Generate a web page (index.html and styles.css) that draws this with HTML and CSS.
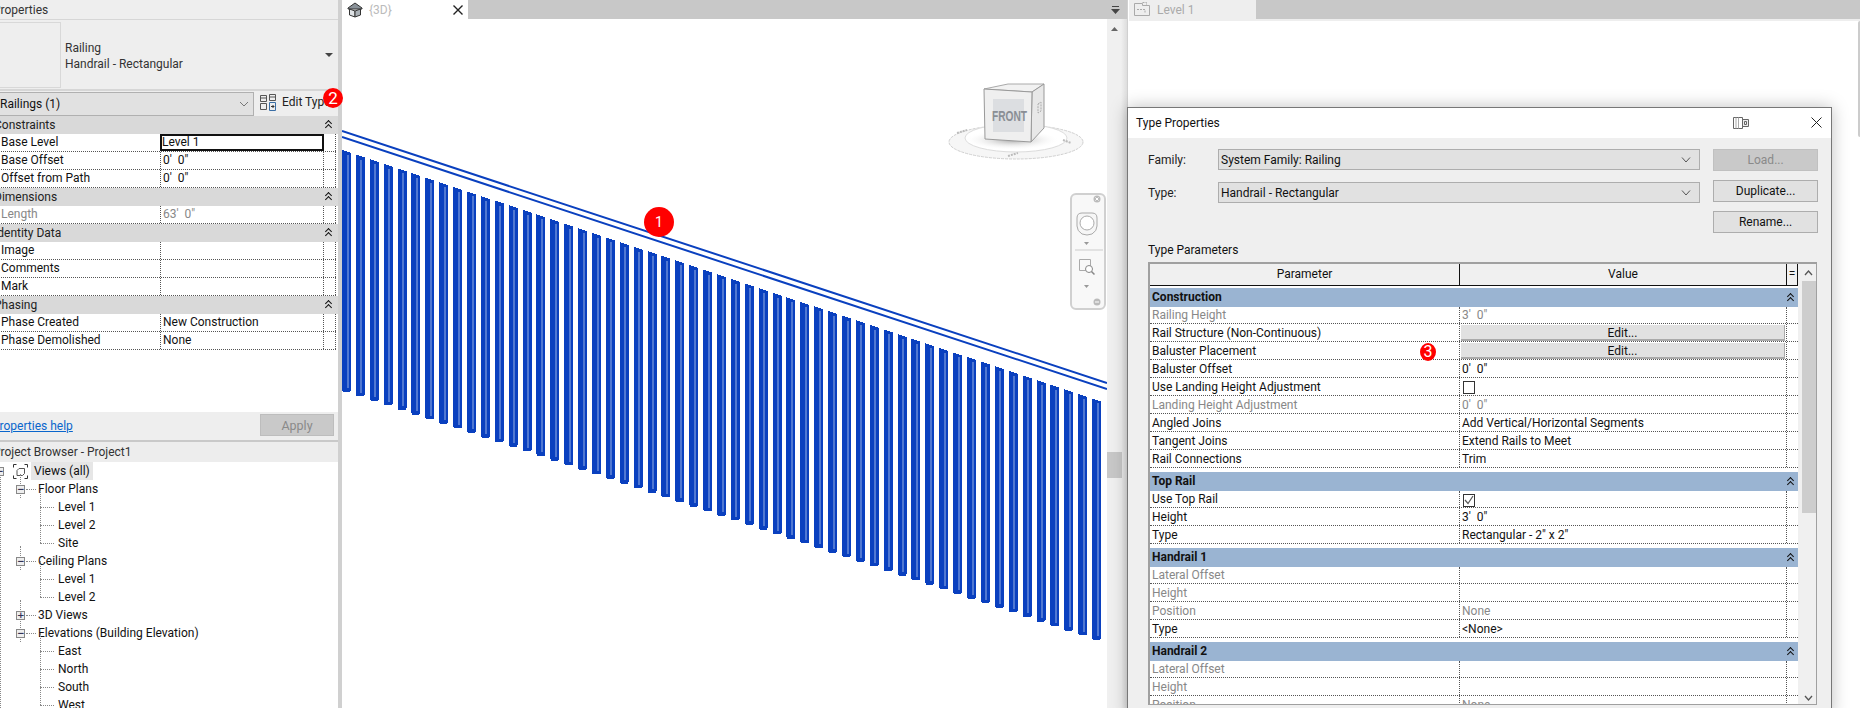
FILE: index.html
```html
<!DOCTYPE html>
<html lang="en">
<head>
<meta charset="utf-8">
<title>Type Properties</title>
<link rel="stylesheet" href="styles.css">
</head>
<body>
<div class="app">

  <aside class="side">
    <div class="side-inner">
      <div class="pane-title">Properties</div>
      <div class="type-sel">
        <div class="thumb"></div>
        <div class="type-name"><div>Railing</div><div>Handrail - Rectangular</div></div>
        <svg class="caret" width="8" height="4" viewBox="0 0 8 4"><path d="M0 0h8L4 4z" fill="#444"/></svg>
      </div>
      <div class="filter-row">
        <div class="filter">Railings (1)
          <svg class="chev" width="10" height="6" viewBox="0 0 10 6"><path d="M1 1l4 4 4-4" fill="none" stroke="#777"/></svg>
        </div>
        <div class="edit-type">
          <svg width="17" height="17" viewBox="0 0 17 17" fill="none" stroke="#555"><path d="M.5 1.500h6v6h-6zM.5 9.500h6v6h-6zM9.500.500h6v6h-6zM.500 4h6M9.500 3h6"/><path d="M9.500 8.500h6v8h-6z" stroke="#3a6ea5" /><path d="M11 12.500h3M12.500 11l1.500 1.500-1.500 1.500" stroke="#333"/></svg>
          <span>Edit Type</span>
        </div>
      </div>
      <div class="prop-table">
        <div class="grp">Constraints<i class="dbl"></i></div>
        <div class="row"><span class="k">Base Level</span><span class="v v-active">Level 1</span><span class="e"></span></div>
        <div class="row"><span class="k">Base Offset</span><span class="v">0'&nbsp; 0"</span><span class="e"></span></div>
        <div class="row"><span class="k">Offset from Path</span><span class="v">0'&nbsp; 0"</span><span class="e"></span></div>
        <div class="grp">Dimensions<i class="dbl"></i></div>
        <div class="row off"><span class="k">Length</span><span class="v">63'&nbsp; 0"</span><span class="e"></span></div>
        <div class="grp">Identity Data<i class="dbl"></i></div>
        <div class="row"><span class="k">Image</span><span class="v"></span><span class="e"></span></div>
        <div class="row"><span class="k">Comments</span><span class="v"></span><span class="e"></span></div>
        <div class="row"><span class="k">Mark</span><span class="v"></span><span class="e"></span></div>
        <div class="grp">Phasing<i class="dbl"></i></div>
        <div class="row"><span class="k">Phase Created</span><span class="v">New Construction</span><span class="e"></span></div>
        <div class="row"><span class="k">Phase Demolished</span><span class="v">None</span><span class="e"></span></div>
      </div>
      <div class="help-bar"><a class="help" href="#">Properties help</a><div class="apply">Apply</div></div>
      <div class="pane-title browser-title">Project Browser - Project1</div>
      <div class="tree">
        <div class="node n0"><b class="box">−</b><svg class="vicon" width="15" height="15" viewBox="0 0 15 15" fill="none" stroke="#333"><path d="M.5 3.500v-3h3M11.500.500h3v3M14.500 11.500v3h-3M3.500 14.500h-3v-3"/><path d="M4 6.500l2-2h5.500v5l-2 2H4z" stroke="#555"/></svg><span class="sel">Views (all)</span></div>
        <div class="node n1"><b class="box">−</b><span>Floor Plans</span></div>
        <div class="node n2"><span>Level 1</span></div>
        <div class="node n2"><span>Level 2</span></div>
        <div class="node n2 last"><span>Site</span></div>
        <div class="node n1"><b class="box">−</b><span>Ceiling Plans</span></div>
        <div class="node n2"><span>Level 1</span></div>
        <div class="node n2 last"><span>Level 2</span></div>
        <div class="node n1"><b class="box plus">+</b><span>3D Views</span></div>
        <div class="node n1"><b class="box">−</b><span>Elevations (Building Elevation)</span></div>
        <div class="node n2"><span>East</span></div>
        <div class="node n2"><span>North</span></div>
        <div class="node n2"><span>South</span></div>
        <div class="node n2"><span>West</span></div>
      </div>
    </div>
  </aside>

  <section class="view3d">
    <div class="tabbar">
      <div class="tab">
        <svg width="16" height="16" viewBox="0 0 16 16"><path d="M1 6l7-5 7 5v1H1z" fill="#8a9299" stroke="#333"/><path d="M2.500 7l5.500 2v6l-5.500-2z" fill="#dfe3e6" stroke="#333"/><path d="M13.500 7L8 9v6l5.500-2z" fill="#aab1b7" stroke="#333"/></svg>
        <span class="tab-name">{3D}</span>
        <svg class="tab-x" width="10" height="10" viewBox="0 0 10 10"><path d="M.5.500l9 9M9.500.500l-9 9" stroke="#222" stroke-width="1.400"/></svg>
      </div>
      <div class="tab-rest"><svg width="9" height="8" viewBox="0 0 9 8"><path d="M1 0h7v1H1zM0 3h9L4.500 8z" fill="#444"/></svg></div>
    </div>
    <div class="canvas">
      <svg class="rail" width="765" height="689" viewBox="342 19 765 689">
        <defs>
          <g id="bal" shape-rendering="crispEdges">
            <path d="M342 150l9 3v237l-1 1.500h-7l-1-1.500z" fill="#0a40bf"/>
            <rect x="346.500" y="155" width="2" height="233" fill="#5078d2"/>
          </g>
          <g id="b5">
            <use href="#bal"/>
            <use href="#bal" transform="translate(13.890 4.600)"/>
            <use href="#bal" transform="translate(27.780 9.200)"/>
            <use href="#bal" transform="translate(41.670 13.800)"/>
            <use href="#bal" transform="translate(55.560 18.400)"/>
          </g>
        </defs>
        <use href="#b5"/>
        <use href="#b5" transform="translate(69.450 23)"/>
        <use href="#b5" transform="translate(138.900 46)"/>
        <use href="#b5" transform="translate(208.350 69)"/>
        <use href="#b5" transform="translate(277.800 92)"/>
        <use href="#b5" transform="translate(347.250 115)"/>
        <use href="#b5" transform="translate(416.700 138)"/>
        <use href="#b5" transform="translate(486.150 161)"/>
        <use href="#b5" transform="translate(555.600 184)"/>
        <use href="#b5" transform="translate(625.050 207)"/>
        <use href="#b5" transform="translate(694.500 230)"/>
        <path d="M342 131L1107 383M342 137L1107 389" stroke="#0a40bf" stroke-width="2" fill="none"/>
      </svg>
      <div class="badge b1">1</div>

      <svg class="cube" width="140" height="84" viewBox="0 0 140 84">
        <defs>
          <radialGradient id="sh"><stop offset="0" stop-color="#8c8c8c" stop-opacity=".75"/><stop offset="1" stop-color="#fff" stop-opacity="0"/></radialGradient>
        </defs>
        <ellipse cx="70" cy="62" rx="67" ry="17" fill="#f6f6f6" stroke="#cfcfcf" stroke-dasharray="3 1"/>
        <ellipse cx="70" cy="58" rx="51" ry="14" fill="#fff" stroke="#dcdcdc"/>
        <ellipse cx="66" cy="60" rx="48" ry="10" fill="url(#sh)"/>
        <path d="M38 9L62 4h36L86 12z" fill="#f2f2f2" stroke="#aaa"/>
        <path d="M86 12L98 4v44L85 62z" fill="#e8e8e8" stroke="#999"/>
        <path d="M38 9l48 3-1 50-46-3z" fill="#efefef" stroke="#999"/>
        <rect x="47" y="19" width="31" height="33" fill="#dcdee1"/>
        <text class="front" x="46" y="41" textLength="35" lengthAdjust="spacingAndGlyphs">FRONT</text>
        <path d="M92 24l3-2v9l-3 2z" fill="none" stroke="#aaa" stroke-dasharray="2 1"/>
        <path d="M11 53l10-3M117 60l8 3M62 76l10-3" stroke="#bbb" stroke-width="2" stroke-dasharray="2 1"/>
      </svg>

      <div class="navbar">
        <svg width="32" height="113" viewBox="0 0 32 113" fill="none">
          <circle cx="25" cy="4" r="3.500" fill="#bbb"/>
          <path d="M23.500 2.500l3 3M26.500 2.500l-3 3" stroke="#fff"/>
          <path d="M5 23q0-5 5-5h10q5 0 5 5v8q0 5-5 8-5 2-10 0-5-3-5-8z" stroke="#aaa" fill="#f6f6f6"/>
          <circle cx="15" cy="28" r="7" stroke="#aaa" fill="#fff"/>
          <path d="M12 47h5l-2.500 3z" fill="#999"/>
          <path d="M3 55h28" stroke="#ccc"/>
          <path d="M7.500 64.500h11v11h-11z" stroke="#aaa"/>
          <circle cx="17" cy="74" r="3.500" stroke="#888" fill="#fff"/>
          <path d="M19.500 76.500l3 3" stroke="#888" stroke-width="1.500"/>
          <path d="M12 90h5l-2.500 3z" fill="#999"/>
          <circle cx="25" cy="107" r="3.500" fill="#bbb"/>
          <path d="M23 107h4" stroke="#fff"/>
        </svg>
      </div>
      <div class="vscroll">
        <svg class="vup" width="15" height="15" viewBox="0 0 15 15"><path d="M4 10l3.500-4 3.500 4z" fill="#666"/></svg>
        <div class="vthumb"></div>
      </div>
    </div>
  </section>

  <section class="view2">
    <div class="tabbar tabbar2">
      <div class="tab tab2">
        <svg width="17" height="15" viewBox="0 0 17 15" fill="none" stroke="#aaa"><path d="M.5 1.500h8v2h7v10H.5z"/><path d="M8.500.5h4v3M3 7.500h8v4" stroke-dasharray="2 1"/></svg>
        <span class="tab-name t2">Level 1</span>
      </div>
      <div class="tab-rest2"></div>
    </div>
    <div class="strip"></div>
    <div class="canvas2"><div class="edge"></div></div>
  </section>

  <div class="badge b2">2</div>

  <div class="dialog">
    <div class="dlg-title">
      <span>Type Properties</span>
      <svg class="preview" width="16" height="14" viewBox="0 0 16 14" fill="none" stroke="#666"><path d="M.5 1.500h9v11h-9z"/><path d="M3 1.500v11M5.500 1.500v11" stroke="#aaa"/><path d="M9.500 3.500h6v7h-6z" fill="#eee"/><path d="M11.500 5.500h2v3h-2z"/></svg>
      <svg class="close" width="11" height="11" viewBox="0 0 11 11"><path d="M.5.500l10 10M10.500.500l-10 10" stroke="#222"/></svg>
    </div>
    <div class="dlg-body">
      <div class="form">
        <div class="form-left">
          <div class="f-row"><label>Family:</label><div class="combo"><span>System Family: Railing</span><svg width="10" height="6" viewBox="0 0 10 6"><path d="M1 .500l4 4.500 4-4.500" fill="none" stroke="#555"/></svg></div></div>
          <div class="f-row"><label>Type:</label><div class="combo"><span>Handrail - Rectangular</span><svg width="10" height="6" viewBox="0 0 10 6"><path d="M1 .500l4 4.500 4-4.500" fill="none" stroke="#555"/></svg></div></div>
        </div>
        <div class="form-btns">
          <div class="btn disabled">Load...</div>
          <div class="btn">Duplicate...</div>
          <div class="btn">Rename...</div>
        </div>
      </div>
      <div class="tp-label">Type Parameters</div>
      <div class="tp-wrap">
        <div class="tp-main">
          <div class="tp-head"><span class="c1">Parameter</span><span class="c2">Value</span><span class="c3">=</span></div>
          <div class="tgrp">Construction<i class="dbl"></i></div>
          <div class="trow off"><span class="c1">Railing Height</span><span class="c2">3'&nbsp; 0"</span><span class="c3"></span></div>
          <div class="trow"><span class="c1">Rail Structure (Non-Continuous)</span><span class="c2 cbtn"><b>Edit...</b></span><span class="c3"></span></div>
          <div class="trow"><span class="c1">Baluster Placement</span><span class="c2 cbtn"><b>Edit...</b></span><span class="c3"></span></div>
          <div class="trow"><span class="c1">Baluster Offset</span><span class="c2">0'&nbsp; 0"</span><span class="c3"></span></div>
          <div class="trow"><span class="c1">Use Landing Height Adjustment</span><span class="c2"><i class="chk"></i></span><span class="c3"></span></div>
          <div class="trow off"><span class="c1">Landing Height Adjustment</span><span class="c2">0'&nbsp; 0"</span><span class="c3"></span></div>
          <div class="trow"><span class="c1">Angled Joins</span><span class="c2">Add Vertical/Horizontal Segments</span><span class="c3"></span></div>
          <div class="trow"><span class="c1">Tangent Joins</span><span class="c2">Extend Rails to Meet</span><span class="c3"></span></div>
          <div class="trow"><span class="c1">Rail Connections</span><span class="c2">Trim</span><span class="c3"></span></div>
          <div class="tgrp gapped">Top Rail<i class="dbl"></i></div>
          <div class="trow"><span class="c1">Use Top Rail</span><span class="c2"><i class="chk"><svg width="10" height="10" viewBox="0 0 10 10"><path d="M1 5l3 3.500L9 1" fill="none" stroke="#555" stroke-width="1.200"/></svg></i></span><span class="c3"></span></div>
          <div class="trow"><span class="c1">Height</span><span class="c2">3'&nbsp; 0"</span><span class="c3"></span></div>
          <div class="trow"><span class="c1">Type</span><span class="c2">Rectangular - 2" x 2"</span><span class="c3"></span></div>
          <div class="tgrp gapped">Handrail 1<i class="dbl"></i></div>
          <div class="trow off"><span class="c1">Lateral Offset</span><span class="c2"></span><span class="c3"></span></div>
          <div class="trow off"><span class="c1">Height</span><span class="c2"></span><span class="c3"></span></div>
          <div class="trow off"><span class="c1">Position</span><span class="c2">None</span><span class="c3"></span></div>
          <div class="trow"><span class="c1">Type</span><span class="c2">&lt;None&gt;</span><span class="c3"></span></div>
          <div class="tgrp gapped">Handrail 2<i class="dbl"></i></div>
          <div class="trow off"><span class="c1">Lateral Offset</span><span class="c2"></span><span class="c3"></span></div>
          <div class="trow off"><span class="c1">Height</span><span class="c2"></span><span class="c3"></span></div>
          <div class="trow off"><span class="c1">Position</span><span class="c2">None</span><span class="c3"></span></div>
        </div>
        <div class="tp-scroll">
          <svg class="sc-up" width="9" height="6" viewBox="0 0 9 6"><path d="M1 5l3.500-4L8 5" fill="none" stroke="#555" stroke-width="1.300"/></svg>
          <div class="sc-thumb"></div>
          <svg class="sc-down" width="9" height="6" viewBox="0 0 9 6"><path d="M1 1l3.500 4L8 1" fill="none" stroke="#555" stroke-width="1.300"/></svg>
        </div>
      </div>
    </div>
    <div class="badge b3">3</div>
  </div>
</div>
</body>
</html>
```

FILE: styles.css
```css
* { box-sizing: border-box; }
html, body { margin: 0; height: 100%; overflow: hidden; background: #fff; }
body { font: 12px/18px Roboto, "Liberation Sans", sans-serif; color: #111; }
.app { position: relative; display: flex; width: 1860px; height: 708px; overflow: hidden; }
.dbl { position: absolute; right: 7px; top: 3px; width: 7px; height: 10px; }
.dbl::before, .dbl::after { content: ""; position: absolute; left: 1.500px; width: 4px; height: 4px; border-left: 1.500px solid #111; border-top: 1.500px solid #111; transform: rotate(45deg); }
.dbl::before { top: 2px; }
.dbl::after { top: 6px; }

/* left panel */
.side { flex: 0 0 342px; overflow: hidden; background: #eee; border-right: 4px solid #d0d0d0; }
.side-inner { width: 346px; margin-left: -8px; }
.pane-title { height: 19px; padding: 1px 0 0 1px; color: #333; }
.type-sel { display: flex; align-items: center; height: 72px; border: 1px solid #d6d6d6; border-width: 1px 0 2px; padding: 2px 0 1px 8px; }
.thumb { width: 61px; height: 66px; border: 1px solid #d8d8d8; border-left: 0; flex: none; }
.type-name { flex: 1; padding-left: 4px; color: #333; line-height: 16px; margin-top: 2px; }
.caret { margin-right: 5px; }
.filter-row { display: flex; height: 25px; padding-top: 1px; }
.filter { display: flex; align-items: center; justify-content: space-between; width: 262px; height: 24px; background: #e1e1e1; border: 1px solid #b0b0b0; border-left: 0; padding: 0 4px 0 8px; }
.edit-type { display: flex; align-items: center; gap: 5px; height: 20px; padding-left: 6px; white-space: nowrap; color: #222; }
.prop-table { background: #fff; height: 296px; }
.grp { position: relative; height: 18px; background: #d9d9d9; padding-left: 2px; color: #222; }
.row { display: flex; height: 18px; border-bottom: 1px dotted #555; width: 344px; }
.row .k { width: 168px; padding-left: 9px; line-height: 17px; }
.row .v { width: 164px; padding-left: 2px; line-height: 17px; border-left: 1px dotted #555; border-right: 1px dotted #555; }
.row .e { width: 12px; border-right: 1px dotted #555; }
.row.off { color: #888; }
.v-active { outline: 2px solid #111; outline-offset: -2px; border: 0 !important; }
.help-bar { display: flex; align-items: center; justify-content: space-between; height: 28px; background: #eee; padding-right: 4px; }
.help { color: #0a66cc; }
.apply { width: 74px; height: 22px; background: #c9c9c9; border: 1px solid #bdbdbd; text-align: center; line-height: 22px; color: #8a8a8a; margin-top: -2px; font-size: 12.500px; }
.browser-title { border-top: 2px solid #c9c9c9; height: 22px; padding-top: 0; line-height: 20px; background: #ededed; }
.tree { background: #fff; height: 246px; }
.node { position: relative; height: 18px; display: flex; align-items: center; white-space: nowrap; }
.node span { position: relative; }
.n0 { padding-left: 8px; }
.n1 { padding-left: 46px; }
.n2 { padding-left: 66px; }
.box { position: absolute; left: 24px; top: 5px; width: 9px; height: 9px; border: 1px solid #888; background: #eee; font: 700 9px/7px "DejaVu Sans", sans-serif; text-align: center; color: #335; z-index: 1; }
.n0 .box { left: 3px; }
.n1::before { content: ""; position: absolute; left: 34px; top: 9px; width: 10px; border-top: 1px dotted #888; }
.n1::after { content: ""; position: absolute; left: 28px; top: -6px; height: 24px; border-left: 1px dotted #888; }
.n0::after { content: ""; position: absolute; left: 8px; top: 12px; height: 240px; border-left: 1px dotted #888; }
.n2::before { content: ""; position: absolute; left: 48px; top: 9px; width: 14px; border-top: 1px dotted #888; }
.n2::after { content: ""; position: absolute; left: 48px; top: -9px; height: 18px; border-left: 1px dotted #888; }
.vicon { margin: 0 3px 0 13px; flex: none; }
.sel { background: #e6e6e6; padding: 0 3px; }

/* badges */
.badge { position: absolute; border-radius: 50%; background: #f00; color: #fff; text-align: center; }
.b2 { left: 323px; top: 88px; width: 20px; height: 20px; font-size: 17px; line-height: 20px; }
.b1 { left: 302px; top: 188px; width: 30px; height: 30px; font-size: 14px; line-height: 30px; }
.b3 { left: 292px; top: 235px; width: 16px; height: 18px; font-size: 16px; line-height: 18px; }

/* 3d view */
.view3d { flex: 0 0 786px; position: relative; border-right: 1px solid #d0d0d0; }
.tabbar { display: flex; height: 19px; background: #c8c8c8; }
.tab { display: flex; align-items: center; width: 126px; height: 19px; padding-left: 5px; background: #fff; position: relative; flex: none; }
.tab-name { margin-left: 6px; color: #bbb; }
.tab-x { position: absolute; right: 5px; top: 5px; }
.tab-rest { flex: 1; display: flex; justify-content: flex-end; align-items: center; padding-right: 7px; }
.canvas { position: relative; height: 689px; }
.rail { display: block; }
.cube { position: absolute; left: 604px; top: 61px; }
.front { font: 700 15px "Liberation Sans", sans-serif; fill: #8a8e94; }
.navbar { position: absolute; left: 728px; top: 174px; width: 36px; height: 117px; background: #f8f8f8; border: 2px solid #d0d0d0; border-radius: 6px; }
.navbar svg { display: block; }
.vscroll { position: absolute; left: 765px; top: 0; bottom: 0; width: 20px; background: linear-gradient(90deg, #f0f0f0 0, #f0f0f0 70%, #ddd 100%); }
.vup { position: absolute; left: 0; top: 2px; display: block; }
.vthumb { position: absolute; left: 0; top: 433px; width: 15px; height: 26px; background: #c8c8c8; }

/* right view */
.view2 { flex: 1; position: relative; padding-left: 1px; }
.tab2 { background: #eee; width: 127px; }
.tab-name.t2 { color: #aaa; margin-left: 6px; }
.strip { height: 2px; background: #eee; }
.canvas2 { position: relative; height: 687px; background: #fff; }
.edge { position: absolute; right: 0; top: 0; width: 2px; height: 116px; background: #ccc; border-radius: 2px 0 0 2px; }

/* dialog */
.dialog { position: absolute; left: 1127px; top: 107px; width: 705px; height: 610px; background: #efefef; border: 1px solid #777; box-shadow: 0 0 16px rgba(0,0,0,.25); }
.dlg-title { position: relative; height: 30px; background: #fff; display: flex; align-items: center; padding-left: 8px; }
.preview { position: absolute; left: 605px; top: 8px; }
.close { position: absolute; left: 683px; top: 9px; }
.dlg-body { padding: 11px 13px 0 20px; }
.form { display: flex; height: 85px; }
.form-left { width: 553px; }
.f-row { display: flex; align-items: center; margin-bottom: 12px; height: 21px; }
.f-row label { width: 70px; color: #222; }
.combo { display: flex; align-items: center; justify-content: space-between; width: 482px; height: 21px; background: #e1e1e1; border: 1px solid #adadad; padding: 0 8px 0 2px; }
.form-btns { margin-left: 13px; width: 105px; }
.btn { height: 22px; margin-bottom: 9px; background: #e1e1e1; border: 1px solid #adadad; text-align: center; line-height: 20px; }
.btn.disabled { background: #c9c9c9; border-color: #c0c0c0; color: #8a8a8a; }
.tp-label { margin-top: 7px; height: 18px; }
.tp-wrap { display: flex; margin-top: 3px; width: 669px; height: 443px; border: 2px solid #a0a0a0; border-width: 2px 1px 1px 2px; background: #fff; overflow: hidden; }
.tp-main { width: 648px; flex: none; background: #fff; overflow: hidden; }
.tp-head { display: flex; height: 22px; background: #f0f0f0; border-bottom: 1px solid #111; text-align: center; }
.tp-head span { line-height: 20px; }
.tp-head .c2 { border-left: 1px solid #111; }
.tp-head .c3 { border-left: 1px solid #111; border-right: 1px solid #111; }
.c1 { width: 309px; flex: none; white-space: nowrap; }
.c2 { width: 327px; flex: none; white-space: nowrap; }
.c3 { width: 12px; flex: none; }
.tgrp { position: relative; height: 19px; background: #9ab4d2; padding-left: 2px; font-weight: 700; line-height: 19px; }
.tgrp .dbl { right: 5px; top: 4px; }
.gapped { margin-top: 4px; }
.tp-head + .tgrp { margin-top: 2px; }
.trow { display: flex; height: 18px; border-bottom: 1px dotted #555; line-height: 19px; }
.tgrp + .trow { height: 17px; line-height: 17px; }
.trow .c1 { padding-left: 2px; }
.trow .c2 { border-left: 1px dotted #555; padding-left: 2px; }
.trow .c3 { border-left: 1px dotted #555; }
.trow.off { color: #888; }
.cbtn { padding: 1px !important; }
.cbtn b { display: block; height: 16px; background: #e1e1e1; border: 1px solid #aaa; border-width: 0 1px 2px 0; text-align: center; font-weight: 400; line-height: 16px; }
.chk { display: block; width: 12px; height: 13px; margin: 3px 0 0 1px; background: #fff; border: 1px solid #333; }
.chk svg { display: block; }
.tp-scroll { position: relative; flex: 1; background: #f0f0f0; }
.sc-up { position: absolute; left: 6px; top: 6px; }
.sc-down { position: absolute; left: 6px; top: 431px; }
.sc-thumb { position: absolute; left: 4px; top: 17px; width: 15px; height: 232px; background: #cdcdcd; }
```
